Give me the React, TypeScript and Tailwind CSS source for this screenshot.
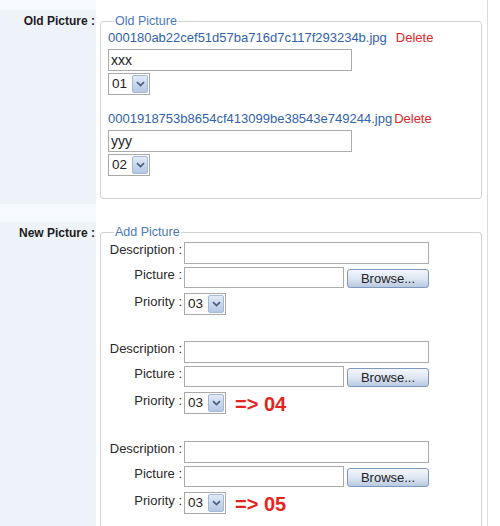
import type { ReactNode } from 'react';

const oldPictures = [
  { file: '000180ab22cef51d57ba716d7c117f293234b.jpg', text: 'xxx', priority: '01', gap: true },
  { file: '0001918753b8654cf413099be38543e749244.jpg', text: 'yyy', priority: '02', gap: false },
];

const newPictures = [{ note: '' }, { note: '=> 04' }, { note: '=> 05' }];

function Select({ value }: { value: string }) {
  return (
    <div className="flex h-[22px] w-[42px] shrink-0 items-center border border-[#a9a9a9] bg-white">
      <span className="pl-[3px] text-[13.5px] leading-[20px] text-[#222]">{value}</span>
      <span className="ml-auto mr-[1px] flex h-[18px] w-[16px] items-center justify-center rounded-[2px] border border-[#a4b8d6] bg-gradient-to-b from-[#e2eaf6] to-[#b4c7e3]">
        <svg width="9" height="6" viewBox="0 0 9 6">
          <path d="M1 1.2 L4.5 4.6 L8 1.2" fill="none" stroke="#4b5f82" strokeWidth="1.8" />
        </svg>
      </span>
    </div>
  );
}

function TextBox({ value = '', className }: { value?: string; className: string }) {
  return (
    <input
      className={`shrink-0 border border-[#ababab] bg-white px-[2px] text-[14px] text-[#222] outline-none ${className}`}
      readOnly
      type="text"
      value={value}
    />
  );
}

function Row({ label, children, top }: { label: string; children: ReactNode; top: string }) {
  return (
    <div className="flex">
      <div className={`w-[96px] shrink-0 bg-[#eef3fa] pr-[1px] text-right text-[12px] font-bold leading-[14px] text-[#1c1c1c] ${top}`}>
        {label}
      </div>
      <div className="flex-1 pl-[4px] pr-[5px]">{children}</div>
    </div>
  );
}

export default function App() {
  return (
    <div className="h-[526px] w-[500px] overflow-hidden bg-white font-['Liberation_Sans',Arial,sans-serif]">
      <div className="h-full w-[488px] border-r border-[#dcdcdc]">
        <div className="flex h-[10px]">
          <div className="w-[96px] bg-[#f6f9fd]" />
        </div>

        <Row label="Old Picture :" top="pt-[4px]">
          <fieldset className="mt-[4px] rounded-[3px] border border-[#d2d2d2] pb-[22px] pl-[7px] pt-[3px]">
            <legend className="ml-[6px] px-[1px] text-[12.5px] leading-[14px] text-[#4a78b8]">Old Picture</legend>
            {oldPictures.map((picture, index) => (
              <div className={index > 0 ? 'mt-[17px]' : ''} key={picture.file}>
                <p className="whitespace-nowrap text-[13px] leading-[14px]">
                  <span className="text-[#3262aa]">{picture.file}</span>
                  <span className={`text-[#e3262b] ${picture.gap ? 'ml-[9px]' : 'ml-[2px]'}`}>Delete</span>
                </p>
                <TextBox className="mt-[4px] block h-[22px] w-[244px]" value={picture.text} />
                <div className="mt-[2px]">
                  <Select value={picture.priority} />
                </div>
              </div>
            ))}
          </fieldset>
          <div className="h-[5px]" />
        </Row>

        <div className="flex h-[18px]">
          <div className="w-[96px] bg-[#f6f9fd]" />
        </div>

        <Row label="New Picture :" top="pt-[4px]">
          <fieldset className="mt-[3px] rounded-[3px] border border-[#d2d2d2] pb-[40px] pl-[7px] pt-[3px]">
            <legend className="ml-[6px] px-[1px] text-[12.5px] leading-[14px] text-[#4a78b8]">Add Picture</legend>
            {newPictures.map((item, index) => (
              <div className={`text-[13px] leading-[15px] text-[#2a2a2a] ${index > 0 ? 'mt-[26px]' : ''}`} key={index}>
                <div className="flex items-start gap-[2px]">
                  <span className="w-[74px] whitespace-nowrap text-right">Description :</span>
                  <TextBox className="h-[22px] w-[245px]" />
                </div>
                <div className="mt-[3px] flex items-start gap-[2px]">
                  <span className="w-[74px] whitespace-nowrap text-right">Picture :</span>
                  <TextBox className="h-[21px] w-[160px]" />
                  <button
                    className="ml-[1px] mt-[2px] h-[19px] w-[82px] rounded-[3px] border border-[#7e99bf] bg-gradient-to-b from-[#f4f7fc] via-[#dfe7f3] to-[#b9c9e0] text-[13px] leading-[16px] text-[#222]"
                    type="button"
                  >
                    Browse...
                  </button>
                </div>
                <div className="mt-[5px] flex items-start gap-[2px]">
                  <span className="w-[74px] whitespace-nowrap pt-[1px] text-right">Priority :</span>
                  <Select value="03" />
                  {item.note && (
                    <span className="ml-[7px] mt-[1px] text-[20px] font-bold leading-[22px] text-[#e52320]">{item.note}</span>
                  )}
                </div>
              </div>
            ))}
          </fieldset>
        </Row>
      </div>
    </div>
  );
}
